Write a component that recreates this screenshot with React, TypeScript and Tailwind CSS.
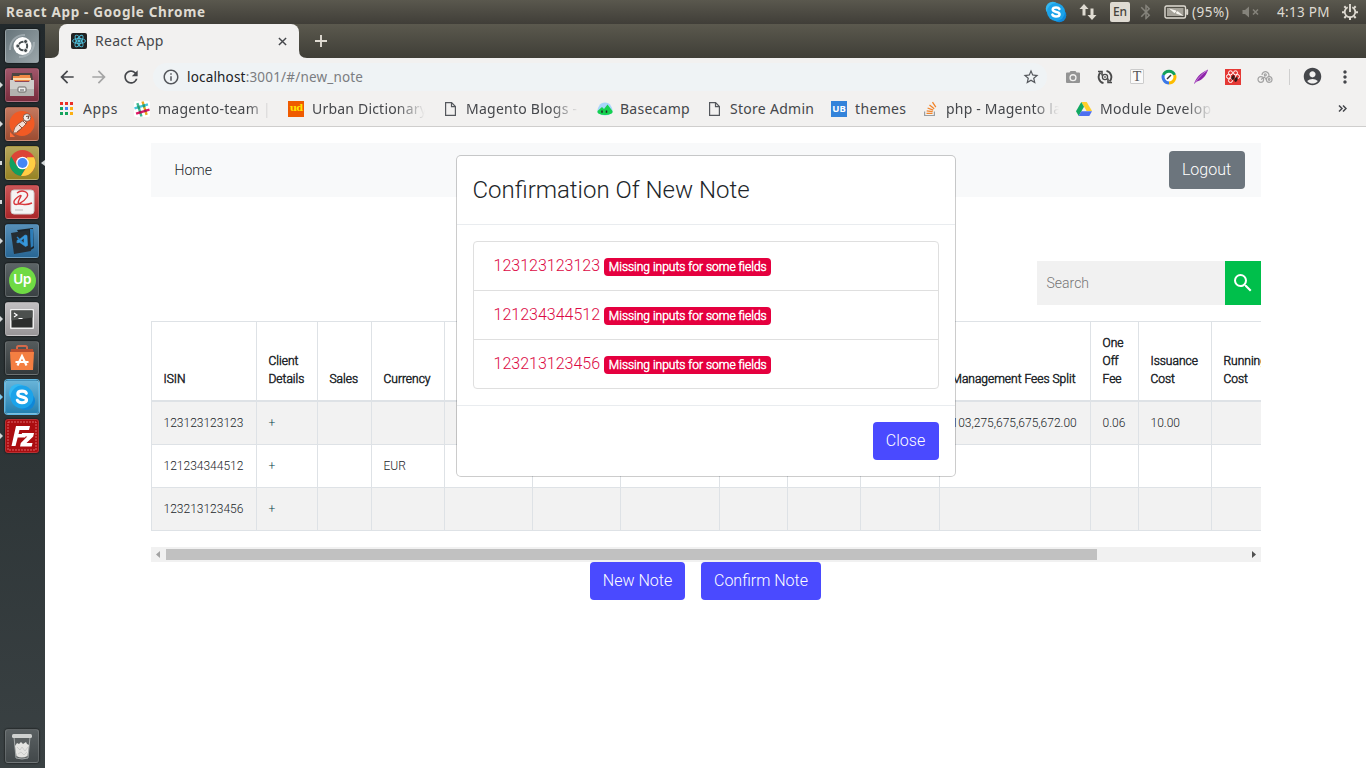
import React from "react";
import {
  MdArrowBack,
  MdArrowForward,
  MdRefresh,
  MdInfoOutline,
  MdStarBorder,
  MdSearch,
  MdAccountCircle,
  MdMoreVert,
  MdBluetooth,
} from "react-icons/md";

const UI = "font-['Noto_Sans',sans-serif]";

/* ---------- system bar ---------- */

function SkypeGlyph({ className }: { className: string }) {
  return (
    <svg viewBox="0 0 24 24" className={className}>
      <circle cx="8.500" cy="8.500" r="7.700" fill="#35b8f1" />
      <circle cx="15.500" cy="15.500" r="7.700" fill="#0f87d8" />
      <circle cx="12" cy="12" r="9.800" fill="#1ba3ea" />
      <path
        d="M15.700 8.800C15.200 7.500 13.800 7 12.100 7c-2.200 0-3.700.8-3.700 2.400 0 3.500 7.500 1.700 7.500 5 0 1.700-1.700 2.500-3.900 2.500-2 0-3.400-.6-4-2.100"
        fill="none"
        stroke="#fff"
        strokeWidth="2.700"
        strokeLinecap="round"
      />
    </svg>
  );
}

function SystemBar() {
  return (
    <header
      className={`flex h-6 items-center bg-linear-to-b from-[#5a584e] to-[#403e38] text-[#dfdbd2] ${UI}`}
    >
      <div className="flex-1 pl-[6px] text-[13.5px] leading-6 font-bold tracking-[0.68px]">
        React App - Google Chrome
      </div>
      <div className="flex h-6 items-center text-[13.5px]">
        <div className="flex w-8 justify-center">
          <SkypeGlyph className="size-[22px]" />
        </div>
        <div className="flex w-8 justify-center">
          <svg viewBox="0 0 18 18" className="size-[18px]" fill="#dfdbd2">
            <path d="M5 1l4.500 5H6.500v6.500h-3V6H.5zM13 17l-4.500-5h3V5.500h3V12h3z" />
          </svg>
        </div>
        <div className="flex w-8 justify-center">
          <div className="h-5 w-5 rounded-[2px] bg-[#dfdbd2] text-center text-[12px] leading-5 font-medium text-[#45433c]">
            En
          </div>
        </div>
        <div className="flex w-5 justify-center">
          <MdBluetooth className="size-[18px] text-[#85837b]" />
        </div>
        <div className="flex w-9 justify-end pr-[3px]">
          <svg viewBox="0 0 25 14" className="h-[14px] w-[25px]">
            <rect x="1" y="1" width="20.500" height="12" rx="1.500" fill="none" stroke="#dfdbd2" strokeWidth="1.400" />
            <rect x="3" y="3" width="16.500" height="8" fill="#a5a299" />
            <rect x="22.200" y="4" width="2" height="6" rx="1" fill="#dfdbd2" />
            <path d="M5 3.500l7 2 .5 2 1-1.500 6 5-7-2.300-.8-1.900-1.200 1.500z" fill="#f7f5ef" />
          </svg>
        </div>
        <div className="w-[50px] text-[13.5px] tracking-[0.5px]">(95%)</div>
        <div className="flex w-[34px] items-center">
          <svg viewBox="0 0 18 12" className="h-3 w-[18px]" stroke="#85837b" fill="#85837b">
            <path d="M.5 4H3l4-3.500v11L3 8H.5z" stroke="none" />
            <path d="M11 3.500l5 5M16 3.500l-5 5" strokeWidth="1.600" />
          </svg>
        </div>
        <div className="w-[64px] pl-[1px] text-[13.5px] tracking-[0.3px] whitespace-nowrap">4:13 PM</div>
        <div className="w-[26px] pl-[1px]">
          <svg viewBox="0 0 18 18" className="size-[18px]" fill="none" stroke="#dfdbd2">
            <path d="M6.700 4.200a5.300 5.300 0 1 0 4.600 0" strokeWidth="1.800" />
            <path d="M9 1v8" strokeWidth="1.900" />
            <path
              d="M3.300 3.300l1.700 1.700M14.700 3.300L13 5M1 9.200h2.500M14.500 9.200H17M3.300 15L5 13.300M14.700 15L13 13.300M9 14.500V17"
              strokeWidth="2"
            />
          </svg>
        </div>
      </div>
    </header>
  );
}

/* ---------- launcher ---------- */

function Tile({ tone, children, mark }: { tone: string; children: React.ReactNode; mark?: "arrow" | "square" | "blue" }) {
  return (
    <div className="relative h-[39px] pl-[5px]">
      {mark === "square" && <i className="absolute top-[15px] left-0 h-[4px] w-[2px] bg-[#d5d9da]" />}
      {mark && mark !== "square" && (
        <svg viewBox="0 0 3 6" className="absolute top-[14px] left-0 h-[6px] w-[3px]">
          <path d="M0 0l3 3-3 3z" fill={mark === "blue" ? "#7cc8ee" : "#d5d9da"} />
        </svg>
      )}
      <div
        className={`flex size-[34px] items-center justify-center rounded-[3px] border border-white/15 shadow-[0_0_2px_#000] ${tone}`}
      >
        {children}
      </div>
    </div>
  );
}

function Launcher() {
  return (
    <aside className="relative flex w-[45px] flex-col bg-linear-to-b from-[#22292c] via-[#2b3335] to-[#3a4143] pt-[5px]">
      <svg viewBox="0 0 4 6" className="absolute top-[136px] left-[41px] h-[6px] w-1">
        <path d="M4 0L0 3l4 3z" fill="#d5d9da" />
      </svg>
      <Tile tone="bg-linear-to-br from-[#67757b] to-[#9ba6aa]">
        <svg viewBox="0 0 30 30" className="size-[30px]">
          <path d="M3 19c0-10 7-15 15-15M27 11c0 10-7 15-15 15" fill="none" stroke="#b6c0c4" strokeWidth="2" opacity=".6" />
          <circle cx="15.500" cy="15" r="9" fill="#fff" />
          <circle cx="16" cy="15" r="4.200" fill="none" stroke="#444b4e" strokeWidth="2" />
          <g stroke="#fff" strokeWidth=".8" fill="#444b4e">
            <circle cx="10.800" cy="15" r="2" />
            <circle cx="18.600" cy="10.500" r="2" />
            <circle cx="18.600" cy="19.500" r="2" />
          </g>
        </svg>
      </Tile>
      <Tile tone="bg-linear-to-b from-[#a0566a] to-[#792c3d]" mark="arrow">
        <svg viewBox="0 0 30 30" className="size-[30px]">
          <path d="M5 3h20l1 8H4z" fill="#4b4441" />
          <path d="M6 6h6l1-1h10l1 6H6z" fill="#f08a45" />
          <path d="M6 8h18v2H6z" fill="#fbd9ac" />
          <path d="M3 10h4l1 2h14l1-2h4v16H3z" fill="#cfcecb" />
          <path d="M3 19h24v7H3z" fill="#b3b2af" />
          <rect x="11" y="17" width="8" height="5" rx="1" fill="#eee" stroke="#6b6967" />
          <path d="M13 20h4" stroke="#555" />
        </svg>
      </Tile>
      <Tile tone="bg-linear-to-b from-[#c4785e] to-[#9c4c31]" mark="arrow">
        <svg viewBox="0 0 30 30" className="size-[30px]">
          <circle cx="15" cy="14.500" r="12.500" fill="#f15a24" />
          <path d="M3 23l5 5H3z" fill="#ff6c37" />
          <path d="M6 24q1-6 5-9l6-4 3 3q-4 4-7 7-3 4-7 3z" fill="#f2ded3" stroke="#8c4b32" strokeWidth=".8" />
          <path d="M12 16l3 3-5 4M16 12l3 3" fill="none" stroke="#9c4f34" strokeWidth="1" />
          <circle cx="20" cy="8.500" r="3.800" fill="#f4eeea" stroke="#6f5145" strokeWidth=".8" />
          <path d="M19 7.500l3-.5-1 3" fill="none" stroke="#6f5145" strokeWidth="1.200" />
        </svg>
      </Tile>
      <Tile tone="bg-linear-to-b from-[#b5a65a] to-[#978322]" mark="square">
        <svg viewBox="0 0 30 30" className="size-[30px]">
          <circle cx="15.500" cy="15" r="13" fill="#dc4437" />
          <path d="M4.200 8.500A13 13 0 0 0 14 27.900L19.500 18.500 9.500 17.500z" fill="#11a05e" />
          <path d="M27 9.200A13 13 0 0 1 14 27.900L21 17l-1-7.800z" fill="#ffce43" />
          <circle cx="15.500" cy="15" r="6.300" fill="#fff" />
          <circle cx="15.500" cy="15" r="5" fill="#4587f4" />
        </svg>
      </Tile>
      <Tile tone="bg-linear-to-b from-[#cb5456] to-[#a92629]" mark="square">
        <svg viewBox="0 0 30 30" className="size-[30px]">
          <rect x="4" y="3" width="23" height="24" rx="3" fill="#f5f4f4" stroke="#d0cccc" />
          <path
            d="M10 6C15 2 23 5 20 10S8 20 7 16 15 7 14 9s-5 8-1 8 5 2 12-1"
            fill="none"
            stroke="#d8383c"
            strokeWidth="1.400"
          />
          <path d="M8 23h8" stroke="#bbb" />
        </svg>
      </Tile>
      <Tile tone="bg-linear-to-b from-[#568fb8] to-[#286795]" mark="arrow">
        <svg viewBox="0 0 30 30" className="size-[30px]">
          <path d="M10 4l16-2 1 20-5 3z" fill="#1b242b" />
          <path d="M23 3l3 0 .5 17-3 2z" fill="#2d7db8" />
          <path d="M4 7l18-3 2 21-17 3z" fill="#252d33" />
          <path d="M18 9l2 .5.500 10-2 1-8.500-6 1-1 6 3.500v-5L11 17l-1.500-1z" fill="#3798dc" stroke="#3798dc" strokeWidth=".6" />
          <path d="M10 11l6 6" stroke="#2a86cb" strokeWidth="1.400" />
        </svg>
      </Tile>
      <Tile tone="bg-linear-to-b from-[#5c6466] to-[#3a4143]">
        <div className="size-[27px] rounded-full bg-[#6fda44] text-center font-['Noto_Sans',sans-serif] text-[14px] leading-[23px] font-semibold tracking-[-0.5px] text-white">
          Up
        </div>
      </Tile>
      <Tile tone="bg-linear-to-b from-[#c1bfc1] to-[#989698]" mark="arrow">
        <svg viewBox="0 0 30 30" className="size-[30px]">
          <rect x="3" y="5" width="24" height="20" rx="1" fill="#eee" />
          <rect x="4.500" y="6.500" width="21" height="17" fill="#2c2e2d" />
          <path d="M4.500 6.500h21v7l-21 3z" fill="#4c504e" />
          <path d="M7 9l3 2-3 2M11.500 14.500h4" fill="none" stroke="#fff" strokeWidth="1.200" />
        </svg>
      </Tile>
      <Tile tone="bg-linear-to-b from-[#555b5c] to-[#343a3c]">
        <svg viewBox="0 0 30 30" className="size-[30px]">
          <path d="M10 7V4.500Q10 3 11.500 3h7Q20 3 20 4.500V7" fill="none" stroke="#d4694a" strokeWidth="2" />
          <path d="M4 6h22l1 5H3z" fill="#b94d2e" />
          <path d="M3 9h24l-1 18H4z" fill="#f47e42" />
          <path d="M10.500 22.500L15 13l4.500 9.500M8.500 19h13" fill="none" stroke="#fff" strokeWidth="2.200" />
        </svg>
      </Tile>
      <Tile tone="bg-linear-to-b from-[#68b4d8] to-[#2380b0] ring-1 ring-[#5fb8e4]" mark="blue">
        <SkypeGlyph className="size-[28px]" />
      </Tile>
      <Tile tone="bg-[#ab0d10]" mark="arrow">
        <svg viewBox="0 0 30 30" className="size-[30px]">
          <rect x="1" y="1" width="28" height="28" fill="none" stroke="#dc6769" strokeDasharray="2 1" />
          <path d="M9 5h14l-1 4h-9.500l-1 4H19l-.8 3.500h-7.500L8.500 25h-4z" fill="#fff" />
          <path d="M15 12h12l-.8 3.500L19.500 22h6l-.8 3.500H13l.8-3.500 6.500-6.500h-6z" fill="#fff" />
        </svg>
      </Tile>
      <div className="mt-auto">
        <Tile tone="bg-linear-to-b from-[#5a6062] to-[#42484a]">
          <svg viewBox="0 0 30 30" className="size-[30px]">
            <path d="M7 6l2 21q6 2 12 0l2-21z" fill="#5b6061" stroke="#a4a8a8" />
            <path d="M8 15l2-3 2 1 2-2 2 2 3-2 1 2 2 1-1.500 11q-6 3-11 0z" fill="#e4e4e1" />
            <path d="M10 16l3 3 2-3 3 4 3-4M11 23l3-2 3 3 3-3" fill="none" stroke="#c0c2c1" strokeWidth=".7" />
            <rect x="5" y="3" width="20" height="4" rx="1.500" fill="#cfd1d0" />
          </svg>
        </Tile>
      </div>
    </aside>
  );
}

/* ---------- browser chrome ---------- */

function ReactMark({ className, color }: { className: string; color: string }) {
  return (
    <svg viewBox="0 0 16 16" className={className} fill="none" stroke={color} strokeWidth=".9">
      <ellipse cx="8" cy="8" rx="6.500" ry="2.500" />
      <ellipse cx="8" cy="8" rx="6.500" ry="2.500" transform="rotate(60 8 8)" />
      <ellipse cx="8" cy="8" rx="6.500" ry="2.500" transform="rotate(120 8 8)" />
      <circle cx="8" cy="8" r="1.200" fill={color} />
    </svg>
  );
}

function TabStrip() {
  return (
    <div className="flex h-[34px] bg-linear-to-b from-[#5b594e] to-[#3f3e37]">
      <svg viewBox="0 0 14 34" className="h-[34px] w-[14px]">
        <path d="M14 26q0 8-8 8h8z" fill="#f2f1f0" />
      </svg>
      <div className={`flex w-[240px] items-center rounded-t-[8px] bg-[#f2f1f0] pl-3 ${UI}`}>
        <div className="size-4 rounded-[2px] bg-[#222]">
          <ReactMark className="size-4" color="#4fc3e0" />
        </div>
        <span className="flex-1 pb-[2px] pl-2 text-[14px] tracking-[0.3px] text-[#45474b]">React App</span>
        <svg viewBox="0 0 10 10" className="mr-[12px] size-[9px]" stroke="#45474b" strokeWidth="1.600">
          <path d="M1 1l8 8M9 1L1 9" />
        </svg>
      </div>
      <svg viewBox="0 0 8 34" className="h-[34px] w-2">
        <path d="M0 26q0 8 8 8H0z" fill="#f2f1f0" />
      </svg>
      <svg viewBox="0 0 12 12" className="mt-[11px] ml-2 size-3" stroke="#dfdbd2" strokeWidth="1.900">
        <path d="M6 0v12M0 6h12" />
      </svg>
    </div>
  );
}

function Toolbar() {
  return (
    <div className={`flex h-[37px] items-center ${UI}`}>
      <div className="flex w-[108px] pl-3">
        <div className="w-8"><MdArrowBack className="size-5 text-[#45474b]" /></div>
        <div className="w-8"><MdArrowForward className="size-5 text-[#a5a5a5]" /></div>
        <div className="w-8"><MdRefresh className="size-5 text-[#45474b]" /></div>
      </div>
      <div className="flex h-7 w-[894px] items-center rounded-full bg-[#eff3f5] pl-[9px]">
        <MdInfoOutline className="size-[18px] text-[#54575c]" />
        <div className="flex-1 pt-px pl-[7px] text-[13.5px] tracking-[0.18px] text-[#7b7d81]">
          <span className="text-[#202124]">localhost</span>:3001/#/new_note
        </div>
        <MdStarBorder className="mr-[7px] size-[18px] text-[#54575c]" />
      </div>
      <div className="flex flex-1 items-center pl-[10px]">
        <div className="flex w-8 justify-center">
          <svg viewBox="0 0 16 14" className="h-[14px] w-4">
            <path d="M2 2.500h2.500L5.500 1h5l1 1.500H14q1 0 1 1V12q0 1-1 1H2q-1 0-1-1V3.500q0-1 1-1z" fill="#949494" />
            <circle cx="8" cy="7.700" r="3.600" fill="#f2f1f0" />
            <circle cx="8" cy="7.700" r="2.300" fill="#949494" />
          </svg>
        </div>
        <div className="flex w-8 justify-center">
          <svg viewBox="0 0 16 16" className="size-4" fill="none" stroke="#4a4a4a" strokeWidth="1.900">
            <path d="M6.500 14.200A6.400 6.400 0 0 1 3.500 3.500M9.500 1.800A6.400 6.400 0 0 1 12.500 12.500" />
            <path d="M1 2.500h4v4M15 13.500h-4v-4" strokeWidth="1.600" />
            <circle cx="8" cy="8" r="2.600" strokeWidth="1.300" />
            <circle cx="8" cy="8" r=".5" strokeWidth="1" />
          </svg>
        </div>
        <div className="flex w-8 justify-center">
          <div className="h-[15px] w-[14px] rounded-[1px] border border-[#ccc] bg-[#fafafa] text-center font-['Liberation_Serif',serif] text-[14px] leading-[13px] text-[#555]">
            T
          </div>
        </div>
        <div className="flex w-8 justify-center">
          <svg viewBox="0 0 16 16" className="size-4" fill="none" strokeWidth="3">
            <circle cx="8" cy="8" r="6" fill="#fff" />
            <path d="M2.400 6A6 6 0 0 1 13.600 6" stroke="#12a05c" />
            <path d="M13.600 6A6 6 0 0 1 8 14" stroke="#fdbd00" />
            <path d="M8 14A6 6 0 0 1 2.400 6" stroke="#3b78e7" />
            <path d="M6 10l4-4" stroke="#333" strokeWidth="1.500" />
          </svg>
        </div>
        <div className="flex w-8 justify-center">
          <svg viewBox="0 0 16 16" className="size-4">
            <path d="M1 15C3 9 7 4 15 .5 14 5 10 11 4 12.500z" fill="#8e24aa" />
            <path d="M2 14C5 9 9 5 14 1.500" stroke="#d69be3" strokeWidth=".8" fill="none" />
          </svg>
        </div>
        <div className="flex w-8 justify-center">
          <div className="size-4 bg-[#e53935]">
            <svg viewBox="0 0 16 16" className="size-4" fill="none" stroke="#fff">
              <circle cx="5.500" cy="3.800" r="2" /><circle cx="10.500" cy="3.800" r="2" />
              <circle cx="3.500" cy="7.500" r="2" /><circle cx="12.500" cy="7.500" r="2" /><circle cx="5.500" cy="11.500" r="2" />
              <ellipse cx="8" cy="8.500" rx="1.500" ry="2.500" transform="rotate(25 8 8.500)" fill="#361a18" stroke="none" />
              <ellipse cx="11" cy="10.500" rx="1.500" ry="2.500" transform="rotate(25 11 10.500)" fill="#361a18" stroke="none" />
            </svg>
          </div>
        </div>
        <div className="flex w-8 justify-center">
          <svg viewBox="0 0 16 16" className="size-4" fill="none" stroke="#a3a3a3" strokeWidth="1.200">
            <path d="M5 6a3.500 3.500 0 1 1 6.500 2" />
            <circle cx="3.800" cy="10.500" r="2.800" /><circle cx="12.200" cy="10.500" r="2.800" />
            <circle cx="8.300" cy="5.800" r="1" /><circle cx="12.200" cy="10.500" r=".8" /><path d="M4 10.500L7.500 8l2 3" />
          </svg>
        </div>
        <div className="ml-2 h-4 w-px bg-[#cfcfcf]" />
        <MdAccountCircle className="ml-3 size-[21px] text-[#45474b]" />
        <MdMoreVert className="ml-3 size-5 text-[#45474b]" />
      </div>
    </div>
  );
}

const PageIcon = () => (
  <svg viewBox="0 0 11 14" className="h-[14px] w-[11px]" fill="none" stroke="#54575c" strokeWidth="1.200">
    <path d="M.6.600h6l3.800 3.900v8.900H.6zM6.500.600v4h4" />
  </svg>
);

const FADE = "[mask-image:linear-gradient(to_right,black_75%,transparent)]";

const bookmarks = [
  {
    label: "Apps",
    box: "w-[74px]",
    gap: "w-[23px]",
    text: "tracking-[0.5px]",
    icon: (
      <svg viewBox="0 0 13 13" className="size-[13px]">
        <path d="M0 0h3v3H0zM5 0h3v3H5zM10 0h3v3h-3z" fill="#ea2f28" />
        <path d="M0 5h3v3H0zM0 10h3v3H0z" fill="#14a35c" />
        <path d="M5 5h3v3H5z" fill="#4285f4" />
        <path d="M10 5h3v3h-3zM10 10h3v3h-3z" fill="#fbaf12" />
        <path d="M5 10h3v3H5z" fill="#14a35c" />
      </svg>
    ),
  },
  {
    label: "magento-team |",
    box: "w-[154px]",
    gap: "w-[24px]",
    text: "tracking-[0.25px] w-[112px] [mask-image:linear-gradient(to_right,black_80%,transparent)]",
    icon: (
      <div className="size-4 rounded-[2px] bg-white">
        <svg viewBox="0 0 16 16" className="size-4" strokeWidth="2.400" fill="none">
          <g transform="rotate(-17 8 8)">
            <path d="M5.300 1v14" stroke="#3eb890" />
            <path d="M10.700 1v14" stroke="#e9a820" />
            <path d="M1 5.300h14" stroke="#45c6de" />
            <path d="M1 10.700h14" stroke="#e01765" />
            <path d="M5.300 4v3M10.700 4v3" stroke="#2a9d6e" />
            <path d="M5.300 9.500v2.400M10.700 9.500v2.400" stroke="#a02050" />
          </g>
        </svg>
      </div>
    ),
  },
  {
    label: "Urban Dictionary",
    box: "w-[157px]",
    gap: "w-[24px]",
    text: `tracking-[0.2px] w-[113px] ${FADE}`,
    icon: (
      <div className="size-4 bg-[#ef5b00] text-center font-['DejaVu_Serif',serif] text-[10px] leading-[14px] font-bold tracking-[-0.8px] text-[#ffe400]">
        ud
      </div>
    ),
  },
  { label: "Magento Blogs -", box: "w-[152px]", gap: "w-[21px]", text: `tracking-[0.25px] w-[113px] ${FADE}`, icon: <PageIcon /> },
  {
    label: "Basecamp",
    box: "w-[112px]",
    gap: "w-[23px]",
    text: "tracking-[0.25px]",
    icon: (
      <svg viewBox="0 0 16 14" className="h-[14px] w-4">
        <path d="M8 .5c5 0 8 5 7.500 10Q12 13.500 8 13.500T.5 10.500C0 5.500 3 .5 8 .5z" fill="#a9d6fb" />
        <path d="M.5 9L5 5l2 2 3.500-4.500L15.500 9q.3 2-.8 2.500Q8 14.500 1.300 11.500.300 11 .5 9z" fill="#15d150" />
        <path d="M5 8.500v2.200M9.500 8.500v2.200" stroke="#222" strokeWidth="1.500" />
      </svg>
    ),
  },
  { label: "Store Admin", box: "w-[122px]", gap: "w-[21px]", text: "tracking-[0.28px]", icon: <PageIcon /> },
  {
    label: "themes",
    box: "w-[93px]",
    gap: "w-[24px]",
    text: "tracking-[0.35px]",
    icon: (
      <div className={`size-4 bg-[#3383da] text-center text-[9.5px] leading-4 font-bold text-white ${UI}`}>UB</div>
    ),
  },
  {
    label: "php - Magento la",
    box: "w-[152px]",
    gap: "w-[22px]",
    text: "tracking-[0.2px] w-[113px] [mask-image:linear-gradient(to_right,black_78%,transparent)]",
    icon: (
      <svg viewBox="0 0 13 16" className="h-4 w-[13px]" fill="none">
        <path d="M.6 10.500v4h9.800v-4" stroke="#9b9ea1" strokeWidth="1.200" />
        <path d="M2.500 12.300h6M2.700 9.800l6 .8M3.600 7l5.600 2.200M5.500 4l4.700 3.700M8.500 1.200l3.300 5" stroke="#f28429" strokeWidth="1.300" />
      </svg>
    ),
  },
  {
    label: "Module Develop",
    box: "w-[152px]",
    gap: "w-[24px]",
    text: `tracking-[0.3px] w-[113px] ${FADE}`,
    icon: (
      <svg viewBox="0 0 16 14" className="h-[14px] w-4">
        <path d="M5.300 0h5.400L16 9h-5.400z" fill="#ffcf29" />
        <path d="M5.300 0L0 9.300 2.700 14 8 4.700z" fill="#11a861" />
        <path d="M2.700 14L5.300 9.300H16L13.300 14z" fill="#4d6ff0" />
      </svg>
    ),
  },
];

function BookmarksBar() {
  return (
    <div className={`flex h-[32px] items-center border-b border-[#cfcecd] pb-[4px] pl-[15px] text-[14px] text-[#45474b] ${UI}`}>
      {bookmarks.map((b) => (
        <div key={b.label} className={`flex shrink-0 items-center ${b.box}`}>
          <div className={`shrink-0 ${b.gap}`}>{b.icon}</div>
          <span className={`overflow-hidden whitespace-nowrap ${b.text}`}>{b.label}</span>
        </div>
      ))}
      <svg viewBox="0 0 9 7" className="ml-auto mr-[19px] h-[7px] w-[9px]" fill="none" stroke="#45474b" strokeWidth="1.500">
        <path d="M1 .5l3 3-3 3M5 .5l3 3-3 3" />
      </svg>
    </div>
  );
}

/* ---------- page ---------- */

const columns = [
  { w: "w-[105px]", title: "ISIN" },
  { w: "w-[61px]", title: "Client Details" },
  { w: "w-[54px]", title: "Sales" },
  { w: "w-[73px]", title: "Currency" },
  { w: "w-[88px]", title: "" },
  { w: "w-[88px]", title: "" },
  { w: "w-[99px]", title: "" },
  { w: "w-[68px]", title: "" },
  { w: "w-[73px]", title: "" },
  { w: "w-[79px]", title: "" },
  { w: "w-[151px]", title: "Management Fees Split" },
  { w: "w-[48px]", title: "One Off Fee" },
  { w: "w-[73px]", title: "Issuance Cost" },
  { w: "w-[72px]", title: "Running Cost" },
];

const rows = [
  ["123123123123", "+", "", "", "", "", "", "", "", "", "103,275,675,675,672.00", "0.06", "10.00", ""],
  ["121234344512", "+", "", "EUR", "", "", "", "", "", "", "", "", "", ""],
  ["123213123456", "+", "", "", "", "", "", "", "", "", "", "", "", ""],
];

function NotesTable() {
  return (
    <div className="mt-4 overflow-hidden">
      <table className="w-[1132px] table-fixed border-separate border-spacing-0 text-[12px] leading-[18px]">
        <thead>
          <tr className="h-[81px]">
            {columns.map((c, i) => (
              <th
                key={i}
                className={`border-t border-b-2 border-l border-[#dee2e6] pt-3 pr-2 pb-3 pl-3 text-left align-bottom font-light text-[#212529] [-webkit-text-stroke:0.5px_#212529] ${c.w}`}
              >
                {c.title}
              </th>
            ))}
          </tr>
        </thead>
        <tbody>
          {rows.map((r) => (
            <tr key={r[0]} className="h-[43px] odd:bg-[#f2f2f2]">
              {r.map((v, i) => (
                <td
                  key={i}
                  className={`border-b border-l border-[#dee2e6] px-3 py-0 whitespace-nowrap ${i === 1 ? "text-[#04414d]" : ""}`}
                >
                  {v}
                </td>
              ))}
            </tr>
          ))}
        </tbody>
      </table>
      <div className="mt-4 flex h-[15px] items-center bg-[#f1f1f1]">
        <svg viewBox="0 0 15 15" className="size-[15px]">
          <path d="M9 4v7L5 7.500z" fill="#a3a3a3" />
        </svg>
        <div className="h-[11px] w-[931px] bg-[#c1c1c1]" />
        <svg viewBox="0 0 15 15" className="ml-auto size-[15px]">
          <path d="M6 4v7l4-3.500z" fill="#505050" />
        </svg>
      </div>
    </div>
  );
}

function Dialog() {
  return (
    <section className="absolute top-[28px] left-[410.5px] w-[500px] rounded-[5px] border border-black/20 bg-white bg-clip-padding">
      <h2 className="border-b border-[#e9ecef] p-4 text-[24px] leading-[36px]">Confirmation Of New Note</h2>
      <div className="p-4">
        <ul className="rounded-[4px] border border-[#dfdfdf]">
          {rows.map((r, i) => (
            <li
              key={r[0]}
              className={`flex h-12 items-center pl-5 text-[#dc0a45] ${i < 2 ? "mb-px shadow-[0_1px_0_#dfdfdf]" : ""}`}
            >
              <span className="text-[16px] leading-6">{r[0]}</span>
              <span className="mt-px ml-[4px] h-[18px] rounded-[4px] bg-[#e5003f] px-[4.8px] text-[12px] leading-[18px] font-light whitespace-nowrap text-white [-webkit-text-stroke:0.5px_white]">
                Missing inputs for some fields
              </span>
            </li>
          ))}
        </ul>
      </div>
      <div className="flex justify-end border-t border-[#e9ecef] p-4">
        <button className="h-[38px] w-[66px] rounded-[4px] bg-[#4a4aff] pb-px text-[16px] font-light text-white">Close</button>
      </div>
    </section>
  );
}

function Page() {
  return (
    <main className="relative flex-1 bg-white px-[105.5px] pt-4 font-['Roboto',sans-serif] font-light text-[#212529]">
      <nav className="flex h-[54px] items-center justify-between bg-[#f8f9fa] pr-4 pl-[24px] text-[14px]">
        <span>Home</span>
        <button className="h-[38px] w-[76px] rounded-[4px] bg-[#6c757d] pb-px text-[16px] font-light text-white">Logout</button>
      </nav>
      <div className="mt-16 flex h-11 justify-end">
        <div className="flex w-[188px] items-center bg-[#f1f1f1] pl-[10px] text-[14px] text-[#757575]">Search</div>
        <div className="flex w-9 items-center justify-center bg-[#00bf4b]">
          <MdSearch className="size-6 text-white" />
        </div>
      </div>
      <NotesTable />
      <div className="flex justify-center gap-4 text-[16px] text-white">
        <button className="h-[38px] w-[95px] rounded-[4px] bg-[#4a4aff] pb-px font-light">New Note</button>
        <button className="h-[38px] w-[120px] rounded-[4px] bg-[#4a4aff] pb-px font-light">Confirm Note</button>
      </div>
      <Dialog />
    </main>
  );
}

export default function App() {
  return (
    <div className="flex h-[768px] w-[1366px] flex-col overflow-hidden">
      <SystemBar />
      <div className="flex min-h-0 flex-1">
        <Launcher />
        <div className="flex min-w-0 flex-1 flex-col bg-[#f2f1f0]">
          <TabStrip />
          <Toolbar />
          <BookmarksBar />
          <Page />
        </div>
      </div>
    </div>
  );
}
